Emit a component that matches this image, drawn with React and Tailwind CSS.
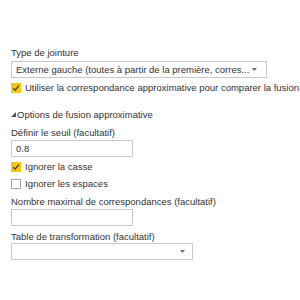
import React from 'react';

function Check({ checked }) {
  return checked ? (
    <span className="flex h-[10px] w-[10px] shrink-0 items-center justify-center bg-[#f2c811]">
      <svg width="8" height="8" viewBox="0 0 8 8">
        <path d="M1.2 4.1 L3.1 6.1 L6.9 1.6" fill="none" stroke="#3a3a3a" strokeWidth="1.3" />
      </svg>
    </span>
  ) : (
    <span className="h-[10px] w-[10px] shrink-0 border border-[#a6a6a6] bg-white"></span>
  );
}

function Caret() {
  return (
    <svg width="5" height="3" viewBox="0 0 5 3" className="shrink-0">
      <path d="M0 0 L5 0 L2.5 3 Z" fill="#6b6b6b" />
    </svg>
  );
}

export default function App() {
  return (
    <div className="h-[300px] w-[300px] overflow-hidden bg-white pl-[11px] pt-[46px] text-[9.5px] leading-[13px] text-[#333] whitespace-nowrap" style={{ fontFamily: '"Liberation Sans", Arial, sans-serif' }}>
      <div>Type de jointure</div>
      <div className="mt-[2px] flex h-[17px] w-[256px] items-center justify-between border border-[#c8c8c8] pl-[4px] pr-[9px]">
        <span>Externe gauche (toutes à partir de la première, corres...</span>
        <Caret />
      </div>
      <div className="mt-[3px] flex items-center gap-[4px]">
        <Check checked />
        <span>Utiliser la correspondance approximative pour comparer la fusion</span>
      </div>

      <div className="mt-[14px] flex items-center">
        <svg width="5" height="5" viewBox="0 0 5 5" className="mr-[1px]">
          <path d="M5 0 L5 5 L0 5 Z" fill="#555" />
        </svg>
        <span>Options de fusion approximative</span>
      </div>
      <div className="mt-[5px]">Définir le seuil (facultatif)</div>
      <div className="mt-[1px] flex h-[17px] w-[122px] items-center border border-[#c8c8c8] pl-[4px]">0.8</div>
      <div className="mt-[3px] flex items-center gap-[4px]">
        <Check checked />
        <span>Ignorer la casse</span>
      </div>
      <div className="mt-[4px] flex items-center gap-[4px]">
        <Check />
        <span>Ignorer les espaces</span>
      </div>
      <div className="mt-[5px]">Nombre maximal de correspondances (facultatif)</div>
      <div className="mt-[1px] h-[17px] w-[122px] border border-[#c8c8c8]"></div>
      <div className="mt-[4px]">Table de transformation (facultatif)</div>
      <div className="flex h-[17px] w-[182px] items-center justify-end border border-[#c8c8c8] pr-[7px]">
        <Caret />
      </div>
    </div>
  );
}
